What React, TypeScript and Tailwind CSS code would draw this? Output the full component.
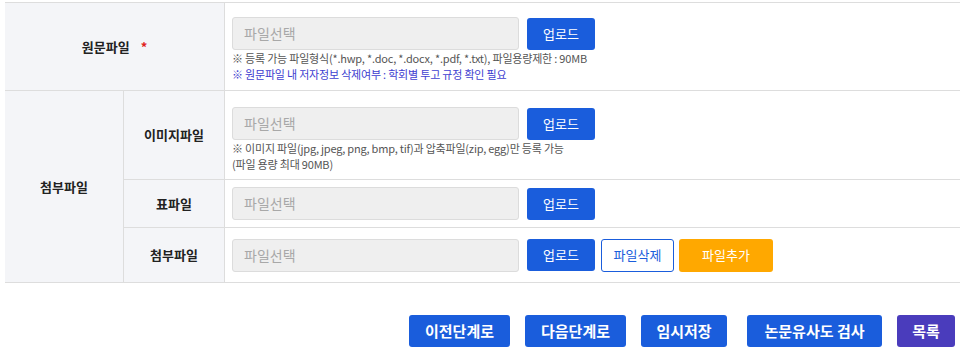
import React from 'react';

const font = { fontFamily: '"Noto Sans CJK KR", "Noto Sans", sans-serif' };

const FileInput: React.FC = () => (
  <div className="w-[287px] h-[33px] rounded-[3px] border border-[#dcdcdc] bg-[#efefef] flex items-center pl-[11px] text-[14px] text-[#a8a8a8]">
    파일선택
  </div>
);

const Upload: React.FC = () => (
  <button className="h-[32px] w-[68px] rounded-[3px] bg-[#1a5ddc] text-white text-[13px]">업로드</button>
);

const Th: React.FC<{ className?: string; children: React.ReactNode }> = ({ className = '', children }) => (
  <div className={`bg-[#f4f5f8] border-r border-b border-[#dddddd] flex items-center justify-center text-[13px] font-bold text-[#222] ${className}`}>
    {children}
  </div>
);

export default function App() {
  return (
    <div className="w-[972px] h-[358px] bg-white pt-[2px] pl-[5px]" style={font}>
      <div className="w-[955px] border-t border-[#dddddd] grid grid-cols-[119px_101px_1fr]">
        {/* 원문파일 */}
        <Th className="col-span-2 h-[88px]">
          원문파일<span className="ml-[11px] text-[#e02020]">*</span>
        </Th>
        <div className="border-b border-[#dddddd] pl-[7px] pt-[14px]">
          <div className="flex items-center gap-[8px]">
            <FileInput />
            <Upload />
          </div>
          <p className="text-[11px] leading-[16px] tracking-[-0.2px] text-[#555]">
            ※ 등록 가능 파일형식(*.hwp, *.doc, *.docx, *.pdf, *.txt), 파일용량제한 : 90MB
          </p>
          <p className="text-[11px] leading-[16px] tracking-[-0.2px] text-[#4040d0]">
            ※ 원문파일 내 저자정보 삭제여부 : 학회별 투고 규정 확인 필요
          </p>
        </div>

        {/* 첨부파일 */}
        <Th className="row-span-3">첨부파일</Th>

        <Th className="h-[89px]">이미지파일</Th>
        <div className="border-b border-[#dddddd] pl-[7px] pt-[16px]">
          <div className="flex items-center gap-[8px]">
            <FileInput />
            <Upload />
          </div>
          <p className="text-[11px] leading-[16px] tracking-[-0.2px] text-[#555]">
            ※ 이미지 파일(jpg, jpeg, png, bmp, tif)과 압축파일(zip, egg)만 등록 가능
            <br />
            (파일 용량 최대 90MB)
          </p>
        </div>

        <Th className="h-[48px]">표파일</Th>
        <div className="border-b border-[#dddddd] pl-[7px] flex items-center gap-[8px]">
          <FileInput />
          <Upload />
        </div>

        <Th className="h-[55px]">첨부파일</Th>
        <div className="border-b border-[#dddddd] pl-[7px] flex items-center">
          <FileInput />
          <div className="ml-[8px]"><Upload /></div>
          <button className="ml-[6px] h-[33px] w-[73px] rounded-[3px] border border-[#1a5ddc] bg-white text-[#1a5ddc] text-[13px]">
            파일삭제
          </button>
          <button className="ml-[5px] h-[33px] w-[94px] rounded-[3px] bg-[#ffa800] text-white text-[13px]">
            파일추가
          </button>
        </div>
      </div>

      {/* 하단 버튼 */}
      <div className="mt-[32px] flex justify-end pr-[17px] text-[15px] font-bold text-white">
        <button className="h-[32px] w-[101px] rounded-[3px] bg-[#1a5ddc]">이전단계로</button>
        <button className="ml-[15px] h-[32px] w-[101px] rounded-[3px] bg-[#1a5ddc]">다음단계로</button>
        <button className="ml-[15px] h-[32px] w-[86px] rounded-[3px] bg-[#1a5ddc]">임시저장</button>
        <button className="ml-[20px] h-[32px] w-[135px] rounded-[3px] bg-[#1a5ddc]">논문유사도 검사</button>
        <button className="ml-[15px] h-[32px] w-[58px] rounded-[3px] bg-[#4a3cbc]">목록</button>
      </div>
    </div>
  );
}
